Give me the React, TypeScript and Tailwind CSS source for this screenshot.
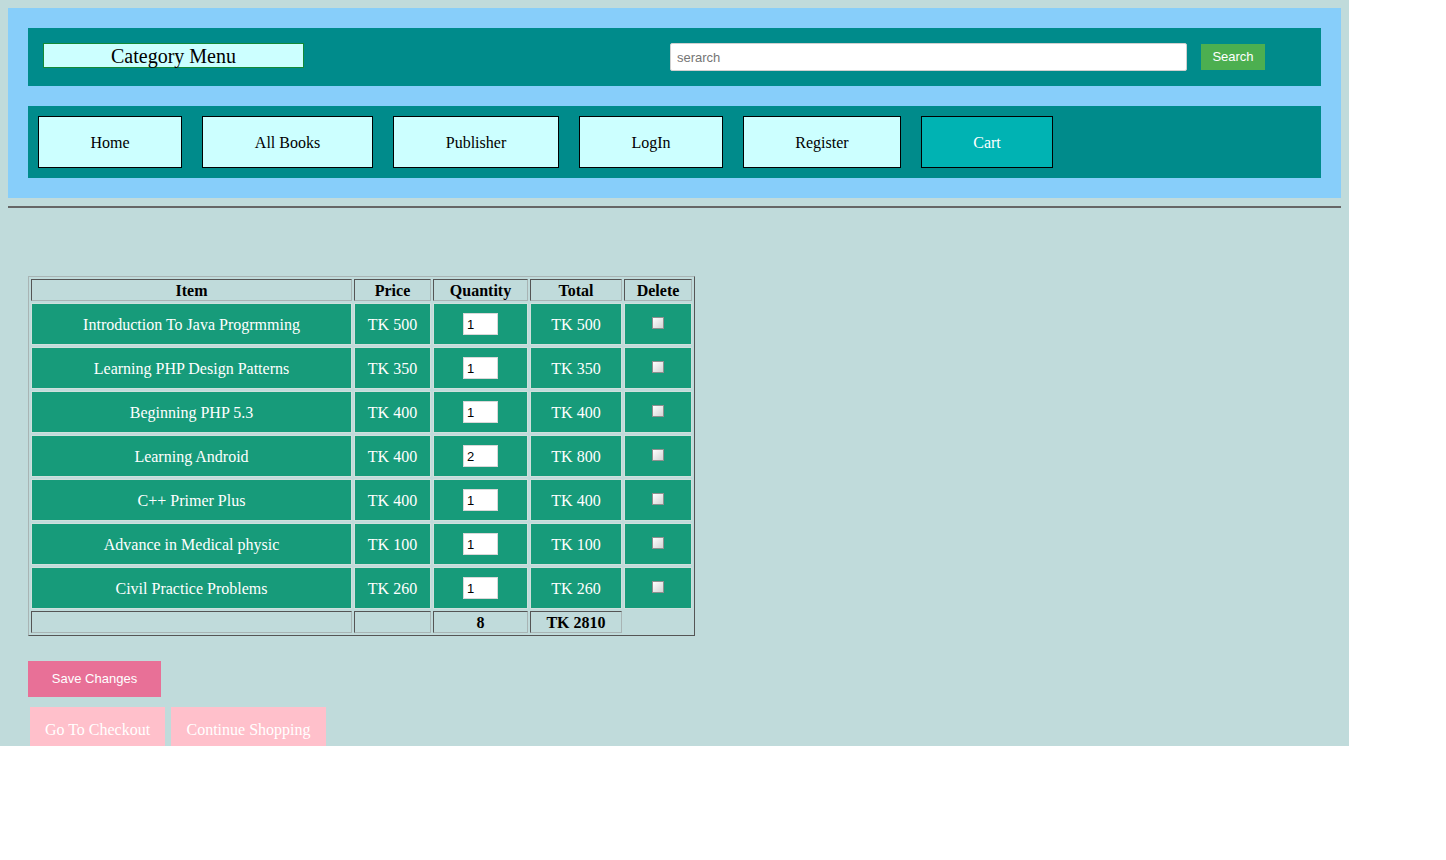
import React from 'react';

const navItems = [
  { label: 'Home', w: 'w-[144px]' },
  { label: 'All Books', w: 'w-[171px]' },
  { label: 'Publisher', w: 'w-[166px]' },
  { label: 'LogIn', w: 'w-[144px]' },
  { label: 'Register', w: 'w-[158px]' },
];

const cartRows = [
  { name: 'Introduction To Java Progrmming', price: 500, qty: 1 },
  { name: 'Learning PHP Design Patterns', price: 350, qty: 1 },
  { name: 'Beginning PHP 5.3', price: 400, qty: 1 },
  { name: 'Learning Android', price: 400, qty: 2 },
  { name: 'C++ Primer Plus', price: 400, qty: 1 },
  { name: 'Advance in Medical physic', price: 100, qty: 1 },
  { name: 'Civil Practice Problems', price: 260, qty: 1 },
];

const headCell =
  'h-[22px] p-0 pt-[2px] border border-t-[#555] border-l-[#555] border-b-[#a8b4b4] border-r-[#a8b4b4] text-center font-bold text-[16px] leading-none text-black';
const dataCell =
  'h-[42px] p-0 pt-[1px] border border-[#cfe0dc] bg-[#179b7a] text-center text-[16px] text-white';

export default function App() {
  const totalQty = cartRows.reduce((s, r) => s + r.qty, 0);
  const totalPrice = cartRows.reduce((s, r) => s + r.qty * r.price, 0);

  return (
    <div className="min-h-[860px] w-full bg-white font-['Liberation_Serif',serif]">
      <div className="h-[746px] w-[1349px] overflow-hidden bg-[#c0dbdb] p-2">
        {/* header */}
        <div className="flex flex-col gap-5 bg-[#87cefa] p-5">
          <div className="flex h-[58px] items-start bg-[#008b8b] pl-[15px] pt-[15px]">
            <div className="flex h-[25px] w-[261px] items-center justify-center border border-[#138a36] bg-[#ccffff] text-[20px] leading-none text-black">
              Category Menu
            </div>
            <div className="ml-[366px] flex items-center">
              <input
                type="text"
                placeholder="serarch"
                className="h-[28px] w-[517px] rounded-[2px] border border-[#d0d0d0] bg-white px-[6px] font-['Liberation_Sans',sans-serif] text-[13px] text-black outline-none placeholder:text-[#757575]"
              />
              <button className="ml-[14px] h-[26px] w-[64px] bg-[#4caf50] font-['Liberation_Sans',sans-serif] text-[13px] text-white">
                Search
              </button>
            </div>
          </div>
          <div className="flex h-[72px] items-start gap-5 bg-[#008b8b] pl-[10px] pt-[10px]">
            {navItems.map((n) => (
              <button
                key={n.label}
                className={`${n.w} h-[52px] border border-black bg-[#ccffff] pt-[2px] text-[16px] text-black`}
              >
                {n.label}
              </button>
            ))}
            <button className="h-[52px] w-[132px] border border-black bg-[#00b3b3] pt-[2px] text-[16px] text-white">
              Cart
            </button>
          </div>
        </div>

        <hr className="mt-2 border-t-2 border-t-[#666] border-b-0" />

        {/* cart table */}
        <table className="ml-5 mt-[68px] border-separate border-spacing-[2px] border border-t-[#a8b4b4] border-l-[#a8b4b4] border-b-[#555] border-r-[#555]">
          <thead>
            <tr>
              <th className={`${headCell} w-[321px]`}>Item</th>
              <th className={`${headCell} w-[77px]`}>Price</th>
              <th className={`${headCell} w-[95px]`}>Quantity</th>
              <th className={`${headCell} w-[92px]`}>Total</th>
              <th className={`${headCell} w-[68px]`}>Delete</th>
            </tr>
          </thead>
          <tbody>
            {cartRows.map((r) => (
              <tr key={r.name}>
                <td className={dataCell}>{r.name}</td>
                <td className={dataCell}>TK {r.price}</td>
                <td className="h-[42px] border border-[#cfe0dc] bg-[#179b7a] p-0">
                  <div className="flex items-center justify-center">
                    <input
                      type="text"
                      defaultValue={r.qty}
                      className="h-[22px] w-[35px] border border-[#d8d8d8] bg-white px-[3px] font-['Liberation_Sans',sans-serif] text-[13px] text-black outline-none"
                    />
                  </div>
                </td>
                <td className={dataCell}>TK {r.qty * r.price}</td>
                <td className="h-[42px] border border-[#cfe0dc] bg-[#179b7a] p-0 pb-[2px]">
                  <div className="flex items-center justify-center">
                    <span className="block h-[12px] w-[12px] border border-[#8f8f8f] bg-gradient-to-br from-[#ffffff] to-[#d4d4d4]" />
                  </div>
                </td>
              </tr>
            ))}
            <tr>
              <td className={headCell}></td>
              <td className={headCell}></td>
              <td className={headCell}>{totalQty}</td>
              <td className={headCell}>TK {totalPrice}</td>
            </tr>
          </tbody>
        </table>

        <div className="ml-5 mt-[25px] flex flex-col items-start gap-[10px]">
          <button className="h-[36px] w-[133px] bg-[#e87097] font-['Liberation_Sans',sans-serif] text-[13px] text-white">
            Save Changes
          </button>
          <div className="ml-[2px] flex gap-[6px]">
            <button className="h-[46px] w-[135px] bg-[#ffc0cb] text-[16px] text-white">
              Go To Checkout
            </button>
            <button className="h-[46px] w-[155px] bg-[#ffc0cb] text-[16px] text-white">
              Continue Shopping
            </button>
          </div>
        </div>
      </div>
    </div>
  );
}
